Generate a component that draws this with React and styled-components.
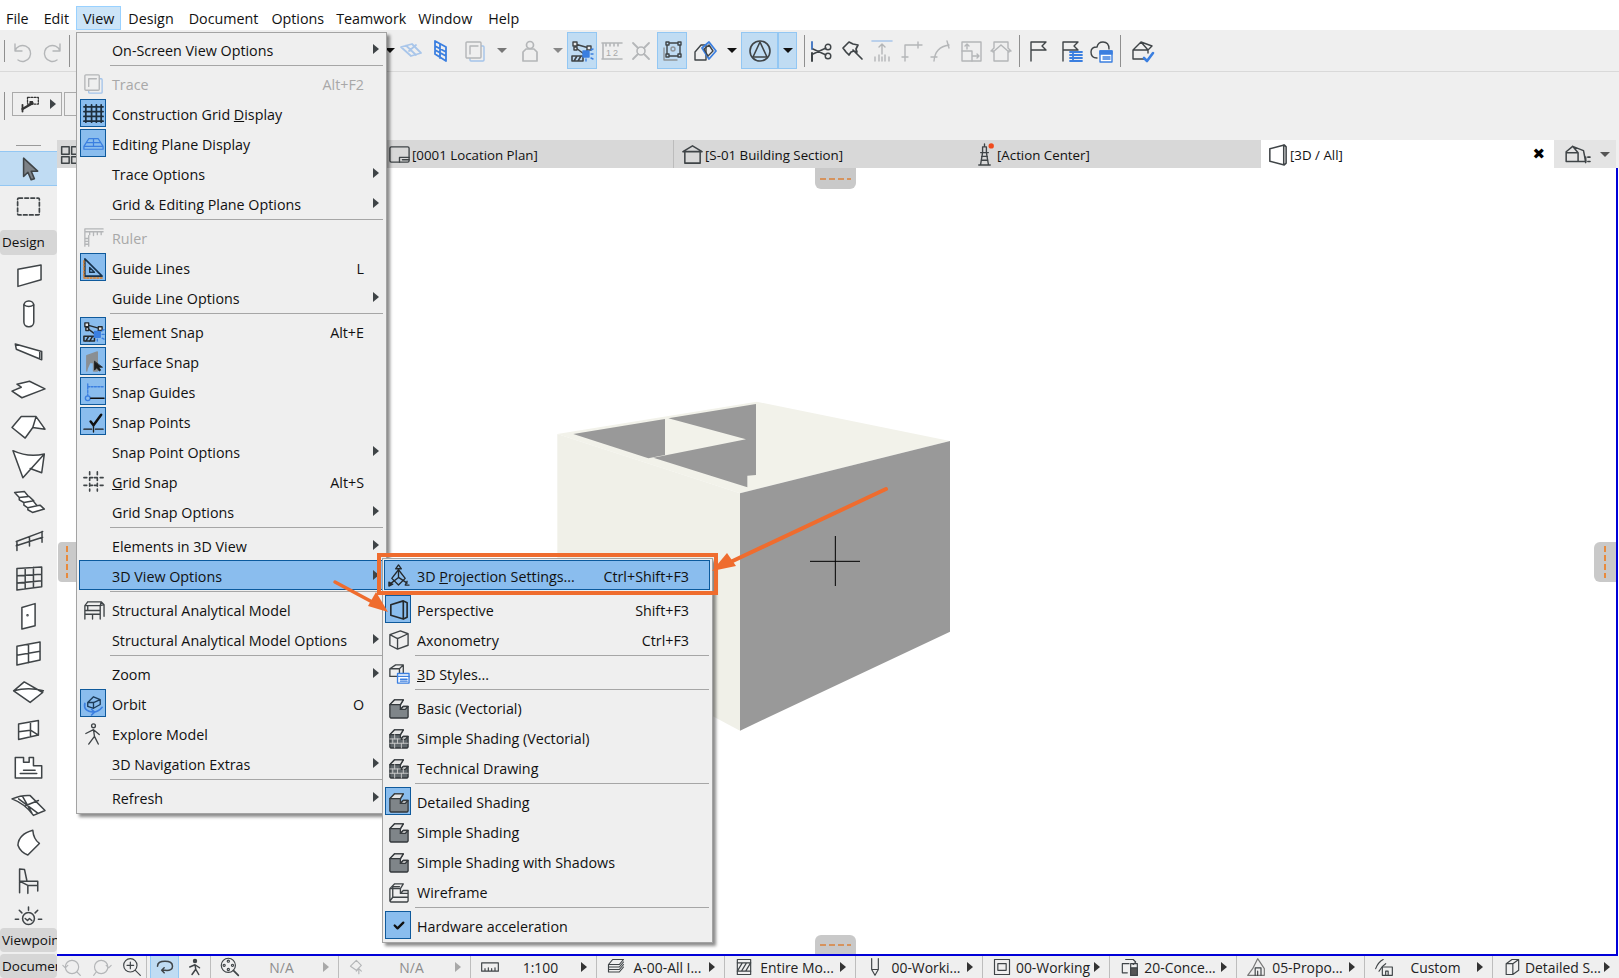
import React from "react";
import styled, { createGlobalStyle } from "styled-components";

const Global = createGlobalStyle`
  html, body { margin: 0; padding: 0; background: #fff; overflow: hidden; }
  * { box-sizing: border-box; }
  body { font-family: "Open Sans", "Noto Sans", sans-serif; color: #111; }
`;

const Svg = styled.svg`
  width: ${(p) => p.$s}px;
  height: ${(p) => p.$s}px;
  flex: none;
  fill: none;
  overflow: visible;
  stroke: ${(p) => p.$c};
  stroke-width: 1.4;
  stroke-linejoin: round;
  stroke-linecap: round;
`;
const SideSvg = styled.svg`
  width: 33px;
  height: 33px;
  flex: none;
  overflow: visible;
  fill: none;
  stroke: #3f4447;
  stroke-width: 4.6;
  stroke-linejoin: round;
  stroke-linecap: round;
`;

const GR = "#b4b6b8";
const BL = "#3b7fe0";
const cubeSolid = "M3 9l5-5h9l-3 5v5l3-3h5v11l-1 1H4l-1-1z";
const cubeTops = "M3 9l5-5h9l-3 5zM14 14l3-3h5l-3 3z";
const I = {
  undo: <path d="M4 5v7h7M4 12a8 8 0 1 1 3 9" />,
  redo: <path d="M20 5v7h-7M20 12a8 8 0 1 0-3 9" />,
  select: <path d="M7 2v17l4-4 3 7 3-1-3-7h6z" fill="#7d8287" stroke="#3f4447" />,
  marquee: <rect x="3" y="5" width="18" height="14" rx="1" strokeDasharray="3 2" />,
  pick: <><rect x="9" y="4" width="13" height="8" strokeDasharray="2.4 1.6" strokeWidth="1.5" /><path d="M3 18L15 11" strokeWidth="2.8" /><path d="M3 13v8" strokeWidth="2.2" /><rect x="12" y="9" width="3" height="3" fill="#333" /></>,
  grid: <path d="M4 3v18M10 3v18M15 3v18M20 3v18M2 5h20M2 10h20M2 15h20M2 20h20" stroke="#1e2f3e" strokeWidth="1.8" />,
  plane: <path d="M7 7h10l5 8H2zM12 7v8M4.5 11h15M2 15v3h20v-3" stroke={BL} strokeWidth="1.3" />,
  trace: <><rect x="7" y="7" width="14" height="15" rx="1" stroke="#a4c4ea" /><rect x="3" y="3" width="15" height="16" rx="1" stroke={GR} fill="#efefef" /><path d="M7 7h8M7 7v8" stroke={GR} /></>,
  ruler: <path d="M3 21V3h19M3 6h19M8 6v3M12 6v4M16 6v3M20 6v3M7 10v1M7 13H3M7 16H3M7 19H3M7 10v11" stroke={GR} />,
  triangle: <><path d="M3 3l18 18H3z" stroke="#16324c" strokeWidth="1.6" /><path d="M8 12l5 5H8z" stroke="#16324c" /><path d="M2 5v18h20" stroke="#e07a1a" strokeDasharray="2 1.5" /></>,
  esnap: <><path d="M5 5l14 4-5 6-8-6z" /><rect x="3" y="3" width="4" height="4" fill="#e8e8e8" /><rect x="17" y="7" width="4" height="4" fill="#e8e8e8" /><rect x="4" y="8" width="3" height="3" fill="#e8e8e8" /><path d="M2 17h11v5H2zM4 22l3-5M8 22l3-5" fill="none" strokeWidth="1.6" /><rect x="13" y="12" width="6" height="6" fill={BL} stroke={BL} /><path d="M21 11l2-1M21 15h2M21 19l2 1M16 20v2" stroke={BL} /></>,
  ssnap: <><path d="M5 22V6l11-4v20h-4v-9H9" fill="#8a8f93" stroke="#8a8f93" /><path d="M13 12v9l2.5-2.5L18 22l1.5-1-2-3h3.5z" fill="#1c1c1c" stroke="#1c1c1c" strokeWidth=".8" /></>,
  sguide: <><path d="M6 4v14" stroke={BL} strokeDasharray="2 1.5" /><path d="M6 7h17" stroke={BL} strokeDasharray="2 1.5" /><circle cx="6" cy="19" r="2.5" stroke={BL} /><path d="M9 19h14" stroke="#111" /></>,
  spoint: <><path d="M9 12l3 4 8-11" stroke="#111" strokeWidth="2.6" /><path d="M2 20h8M14 20h8M12 17v6" stroke="#1c1c1c" /></>,
  gsnap: <path d="M8 2v3M8 8v3M8 14v3M8 20v2M16 2v3M16 8v3M16 14v3M16 20v2M2 8h3M8 8h3M13 8h3M19 8h3M2 16h3M8 16h3M13 16h3M19 16h3" strokeWidth="1.7" />,
  struct: <path d="M6 4h14l3 3v12M3 8h16v14M3 8v14M6 4L3 8M20 4l-1 4M3 13h16M3 17h16M6 13V8M23 7l-4 1M11 17v5" />,
  orbit: <><path d="M6 11l6-6 7 3v5l-7 4-6-2zM12 11l7-3M12 11v6M12 11L6 11" stroke="#1d3c5a" /><path d="M3 12q-2 8 9 9 5 0 9-5M10 18l3 3-3 3" stroke={BL} strokeWidth="1.8" /></>,
  walk: <><circle cx="12" cy="4" r="2" /><path d="M4 12l8-4 6 5M12 8l1 7-6 8M13 15l4 8" /></>,
  proj: <><path d="M12 1l-3 4h6zM12 5v9M12 14l-9 7M12 14l9 6M2 23v-4l4 2zM23 22l-4 0 2-4" /><path d="M5 15l7-9 7 9-7 7z" /></>,
  persp: <path d="M4 7l13-4 4 2v15l-4 2L4 18zM17 3v19" strokeWidth="1.7" />,
  axon: <path d="M3 7l11-4 8 3v12l-11 4-8-4zM3 7l8 4 11-5M11 11v11" />,
  styles: <><path d="M3 7l6-4h8v12H3zM3 7h10l4-4M13 7v8" /><rect x="11" y="12" width="12" height="10" fill="#fff" stroke={BL} /><path d="M11 15h12M14 18h7M14 20h7" stroke={BL} /></>,
  basic: <><path d={cubeSolid} fill="#7f8589" stroke="#34393c" /><path d={cubeTops} fill="#e4e4e4" stroke="#34393c" /></>,
  brick: <><path d={cubeSolid} fill="#5f666a" stroke="#34393c" /><path d={cubeTops} fill="#e4e4e4" stroke="#34393c" /><path d="M3 13.5h11M3 18h19M8 9v4.5M11 13.5V18M6 13.5V18M8 18v5M17 14v4M15 18v5" stroke="#c8c8c8" strokeWidth="1" /></>,
  wire: <path d="M3 9l5-5h9l-3 5v5l3-3h5v11l-1 1H4l-1-1zM6 7h7M6 7v11h16M3 9h11v5h8M6 18l-3 4" />,
  check: <path d="M8 12l3 3 6-6" stroke="#111" strokeWidth="2.4" />,
  planeLt: <path d="M2 8l11-3 9 9-10 3zM7 6.5l10 9.5M10 12l7-6" stroke="#a9c6ea" strokeWidth="1.8" />,
  bluewall: <path d="M6 2l11 6v14L6 15zM6 7l11 6M6 11l11 6M11 5v14" stroke={BL} strokeWidth="1.8" />,
  stamp: <><circle cx="12" cy="6" r="3.5" stroke={GR} strokeWidth="1.7" /><path d="M8 10l-3 3v9h14v-9l-3-3z" stroke={GR} strokeWidth="1.7" /></>,
  ruler12: <><path d="M2 4h20M2 20h20M3 4v16M6 4v3M10 4v3M14 4v3M18 4v3" stroke={GR} strokeWidth="1.6" /><text x="6" y="17" fontSize="9" fill="#a8a8a8" stroke="none" fontFamily="Liberation Sans">1</text><text x="13" y="17" fontSize="9" fill="#a8a8a8" stroke="none" fontFamily="Liberation Sans">2</text></>,
  cross: <><path d="M4 4l5 5M20 4l-5 5M4 20l5-5M20 20l-5-5" stroke={GR} strokeWidth="1.8" /><circle cx="12" cy="12" r="4" stroke={GR} strokeWidth="1.6" /></>,
  nodes: <><path d="M4 9v12h13" stroke="#8f9498" /><rect x="7" y="4" width="13" height="13" /><rect x="6" y="3" width="3" height="3" fill="#c0dcf3" /><rect x="18" y="3" width="3" height="3" fill="#c0dcf3" /><rect x="18" y="15" width="3" height="3" fill="#c0dcf3" /><rect x="6" y="15" width="3" height="3" fill="#c0dcf3" /><circle cx="13" cy="10" r="2" stroke="#8f9498" /></>,
  diamond: <><path d="M2 13l6-7h5v15H2z" /><path d="M9 9l7-6 7 9-7 8z" stroke={BL} strokeWidth="1.8" /><path d="M11 10l5-4 4 6-5 5z" /></>,
  tri: <><circle cx="12" cy="12" r="10" strokeWidth="1.6" /><path d="M12 3L5 18h14z" strokeWidth="1.6" /></>,
  scissors: <><path d="M3 3v7" stroke="#4b7cc4" strokeWidth="2" /><path d="M3 14v8" strokeWidth="2" /><circle cx="19" cy="8" r="2.8" /><circle cx="19" cy="17" r="2.8" /><path d="M4 10l13 6M4 15l13-6" /></>,
  hammer: <path d="M3 9l6-6 4 2 5 1-2 4 1 3-3-1-3 1-2 3-3-3zM13 11l9 9" strokeWidth="1.7" />,
  extend: <><path d="M2 2h20" stroke="#a9c6ea" strokeWidth="1.6" /><path d="M12 15V5M9 8l3-3 3 3M5 22v-4M9 22v-6M12 22v-4M15 22v-6M19 22v-4" stroke={GR} /></>,
  corner: <path d="M6 22V6h17M3 18h6M19 3v6" stroke={GR} />,
  curve: <path d="M5 22Q6 8 20 6M2 18h6M18 2l2 7" stroke={GR} />,
  arrbox: <><rect x="3" y="3" width="19" height="19" stroke={GR} /><path d="M3 12h10v10M8 10V5M6 7l2-2 2 2M14 17h6M18 15l2 2-2 2" stroke={GR} /></>,
  home: <path d="M5 3h14v6l3 3-3 0v10H5V12H2l3-3zM12 6l-8 7M12 6l8 7" stroke={GR} />,
  flag: <path d="M5 22V3h15l-4 4 4 4H5" />,
  flagList: <><path d="M5 22V3h15l-4 4 4 4H5" /><path d="M12 13h12M12 16h12M12 19h12M12 22h12M15 13v9" stroke={BL} strokeWidth="1.8" /></>,
  cloud: <><path d="M8 19q-6 0-6-6 0-5 6-5 1-5 6-5 6 0 6 7" /><rect x="11" y="12" width="12" height="11" fill="#fff" stroke={BL} /><path d="M11 12h12v3H11z" fill={BL} stroke={BL} /><path d="M14 18h7M14 20h7" stroke={BL} /></>,
  houseCk: <><path d="M3 11l8-8 11 4 -4 4H3zM3 11v9h11M11 3l7 8v3" /><path d="M14 19l3 3 6-8" stroke={BL} strokeWidth="2.6" /></>,
  plan: <><rect x="2" y="4" width="20" height="16" rx="1.5" /><path d="M12 20v-5h10M15 17.5h7" /></>,
  section: <path d="M2 9l10-6 10 6H2zM4 9v12h16V9" strokeWidth="1.6" />,
  light: <><path d="M8 22l2-12h4l2 12M6 23h12M8 10h8M10 4h4v6h-4zM12 1v3M9 14h6M8.5 18h7" /><circle cx="19" cy="3" r="2.8" fill="#f04a1c" stroke="none" /></>,
  p3d: <path d="M4 6l15-4 2 2v17l-2 2L4 19zM18.5 2v21" strokeWidth="1.6" />,
  houseList: <><path d="M2 18V9l6-5 10 4 2 10zM8 4l5 6v8M2 10h11" /><path d="M20 14v5M22 14h2M22 18h2" strokeWidth="1.5" /></>,
  panels: <path d="M2 2h9v9H2zM2 14h9v8H2zM14 2h8v9h-8zM14 14h8v8h-8z" strokeWidth="1.8" />,
  zoomIn: <><circle cx="10" cy="10" r="8" /><path d="M16 16l6 6M6 10h8M10 6v8" /></>,
  undoMag: <><circle cx="12" cy="12" r="8" stroke="#b4b6b8" /><path d="M18 18l4 4M1 10l3 3 3-3" stroke="#b4b6b8" /></>,
  redoMag: <><circle cx="11" cy="12" r="8" stroke="#b4b6b8" /><path d="M5 18l-3 4M17 10l3 3 3-3" stroke="#b4b6b8" /></>,
  orbitS: <path d="M3 11q0-6 9-6 9 0 9 6t-9 5H8M11 13l-3 3 3 3" strokeWidth="1.8" />,
  walkS: <><circle cx="12" cy="4" r="2.2" fill="#3f4447" /><path d="M5 12l7-3 6 4M12 9l1 6-5 7M13 15l4 7" strokeWidth="2" /></>,
  zoomNav: <><circle cx="10" cy="10" r="8.5" /><circle cx="10" cy="5" r="1.3" /><circle cx="10" cy="15" r="1.3" /><circle cx="5" cy="10" r="1.3" /><circle cx="15" cy="10" r="1.3" /><path d="M16 16l6 6" strokeWidth="2" /></>,
  rot: <path d="M3 11l7-7 6 6-6 6zM13 20v-6M10 17l3-3 3 3" stroke={GR} />,
  scale: <path d="M2 7h20v10H2zM6 17v-3M10 17v-4M14 17v-3M18 17v-4" />,
  layers: <path d="M8 3h13l-5 6H3zM3 9v3h13l5-6M3 12v3h13l5-6M3 15v3h13l5-6" />,
  hatch: <><path d="M4 3h16v18H4z" /><path d="M4 7h16M4 17l6-10M9 17l6-10M14 17l6-10M4 17h16" /></>,
  pen: <path d="M8 2v13l4 7 4-7V2M8 15h8" />,
  frame: <><rect x="3" y="3" width="18" height="18" /><rect x="7" y="8" width="10" height="8" /></>,
  concept: <><path d="M4 8h8M4 8v11h6M14 8h8v14h-8z" /><path d="M8 3h9l3 3-3 3" /><path d="M14 13h8v9h-8z" fill="#555" /></>,
  prop: <><path d="M2 22l6-8 6-12 8 12v8H2z" stroke="#777" /><path d="M11 22V13h7v9M14 22v-5" /></>,
  cust: <><path d="M2 14Q5 6 11 3M6 17q3-6 8-9" /><rect x="10" y="12" width="12" height="10" /><path d="M14 22v-5h3v5" /></>,
  boxS: <path d="M5 8l7-5h8v13l-7 5H5zM5 8h8v13M13 8l7-5" />,
};

/* left palette tools, drawn on a 100-unit square */
const W = "#fff";
const sideTools = [
  <path key="wall" d="M18 31L88 18V63L18 83z" fill={W} />,
  <g key="col"><rect x="36" y="12" width="30" height="78" rx="14" fill={W} /><path d="M36 24q15 10 30 0" /></g>,
  <path key="beam" d="M10 27L90 50V75L13 43zM84 49V73" fill={W} />,
  <path key="slab" d="M53 25L100 48 30 75 0 55 28 43 15 34z" fill={W} />,
  <path key="roof" d="M28 17H73L100 55 63 50 40 82 0 50zM73 17L63 50" fill={W} />,
  <path key="shell" d="M3 8Q50 30 98 18L33 90zM98 18L90 75 55 62" fill={W} />,
  <path key="stair" d="M8 20L38 17 50 32 22 35zM22 35V42L36 50 66 45 52 32M36 50V58L48 66 76 60 64 45M48 66V72L62 80 98 70 85 58 75 60" fill={W} />,
  <path key="rail" d="M13 53L93 23M13 66L93 40M15 53V80M53 40V67M91 23V55" />,
  <path key="curtain" d="M15 20L90 15V75L15 85zM15 42L90 37M15 64L90 57M40 18V82M65 16V79" />,
  <g key="door"><path d="M30 23L70 11V78L30 88z" fill={W} /><circle cx="47" cy="46" r="1.5" /></g>,
  <path key="window" d="M15 28L85 15V70L15 85zM15 55L85 43M50 22V78" fill={W} />,
  <path key="morph" d="M37 21L93 53 55 83 5 48zM5 48Q50 35 95 48" fill={W} />,
  <path key="book" d="M20 33L80 23V67L20 80zM56 27V71M20 57L56 52 80 67" fill={W} />,
  <path key="zone" d="M10 20H35V34H52V20H65V45H90V82H10zM35 58H70M25 68H75" fill={W} />,
  <path key="mesh" d="M0 30Q30 18 55 20L100 65 65 80Q40 45 0 30zM32 22L60 72M42 50L80 35M20 30L78 73" fill={W} />,
  <path key="shell2" d="M63 13Q20 25 18 58 25 78 48 88L83 53Q65 40 63 13z" fill={W} />,
  <path key="chair" d="M23 87V15L38 17 45 50M23 52H78V82M23 52L48 65H78M48 65V89" />,
  <g key="lamp"><circle cx="50" cy="50" r="18" /><path d="M50 15v10M22 25l8 8M78 25l-8 8M10 52h10M80 52h10M40 50l7 6 6-6 7 6" /></g>,
];

const Glyph = ({ n, s = 24, c = "#3f4447" }) => (
  <Svg viewBox="0 0 24 24" $s={s} $c={c} aria-hidden="true">{I[n]}</Svg>
);

const App0 = styled.div`
  position: relative;
  width: 1619px;
  height: 978px;
  overflow: hidden;
  display: flex;
  flex-direction: column;
  background: #fff;
`;

/* menu bar */
const MenuBar = styled.div`
  height: 30px;
  flex: none;
  display: flex;
  align-items: flex-end;
  margin-left: -1px;
  background: #fff;
`;
const MenuTitle = styled.div`
  height: 24px;
  padding: 0 ${(p) => p.$pr}px 0 6px;
  font-size: 14.3px;
  line-height: 24px;
  white-space: nowrap;
  border: 1px solid ${(p) => (p.$open ? "#99d1ff" : "transparent")};
  background: ${(p) => (p.$open ? "#cce4f7" : "transparent")};
`;

/* top toolbar */
const TopBar = styled.div`
  height: 42px;
  flex: none;
  display: flex;
  align-items: center;
  padding-left: 4px;
  background: #efefef;
  border-bottom: 1px solid #d9d9d9;
`;
const VSep = styled.div`
  width: 1px;
  height: ${(p) => p.$h ?? 32}px;
  flex: none;
  background: #8f8f8f;
  margin-left: ${(p) => p.$ml ?? 0}px;
`;
const ToolBtn = styled.div`
  width: ${(p) => p.$w}px;
  height: 37px;
  flex: none;
  display: flex;
  align-items: center;
  justify-content: center;
  margin-left: ${(p) => p.$ml ?? 0}px;
  border: 1px solid ${(p) => (p.$on ? "#93c7f3" : "transparent")};
  background: ${(p) => (p.$on ? "#c0dcf3" : "transparent")};
`;
const Caret = styled.div`
  width: 0;
  height: 0;
  flex: none;
  border-left: 5px solid transparent;
  border-right: 5px solid transparent;
  border-top: 5px solid ${(p) => p.$c ?? "#111"};
`;
const BarGap = styled.div`
  width: ${(p) => p.$w}px;
  flex: none;
`;

/* info box row */
const InfoBar = styled.div`
  height: 68px;
  flex: none;
  display: flex;
  align-items: flex-start;
  padding: 20px 0 0 4px;
  background: #efefef;
`;
const InfoBtn = styled.div`
  width: ${(p) => p.$w}px;
  height: 24px;
  margin-left: ${(p) => p.$ml}px;
  flex: none;
  display: flex;
  align-items: center;
  justify-content: space-between;
  padding: 0 5px 0 7px;
  border: 1px solid #aaa;
`;
const RightArrow = styled.div`
  width: 0;
  height: 0;
  flex: none;
  border-top: 5px solid transparent;
  border-bottom: 5px solid transparent;
  border-left: 6px solid ${(p) => p.$c ?? "#3f4447"};
  margin: ${(p) => p.$m ?? "0"};
`;

/* main */
const Main = styled.div`
  flex: 1;
  min-height: 0;
  display: flex;
`;
const Sidebar = styled.div`
  width: 57px;
  flex: none;
  display: flex;
  flex-direction: column;
  background: #efefef;
`;
const SideTop = styled.div`
  height: 11px;
  flex: none;
  display: flex;
  align-items: center;
  justify-content: center;
`;
const SideLine = styled.div`
  width: 25px;
  height: 1px;
  background: #9a9a9a;
`;
const SelectRow = styled.div`
  height: 35px;
  flex: none;
  display: flex;
  align-items: center;
  justify-content: center;
  background: #c0dcf3;
  border-top: 1px solid #93c7f3;
  border-bottom: 1px solid #93c7f3;
`;
const MarqueeRow = styled.div`
  height: 40px;
  flex: none;
  display: flex;
  align-items: center;
  justify-content: center;
`;
const SideTab = styled.div`
  height: ${(p) => p.$h}px;
  flex: none;
  margin-top: ${(p) => p.$mt ?? 0}px;
  padding-left: 2px;
  overflow: hidden;
  white-space: nowrap;
  font-size: 13.5px;
  line-height: ${(p) => p.$h}px;
  background: #d6d6d6;
  border-radius: 4px;
`;
const ToolList = styled.div`
  flex: 1;
  min-height: 0;
  margin-top: 2px;
  overflow: hidden;
  display: flex;
  flex-direction: column;
`;
const SideTool = styled.div`
  height: 37.8px;
  flex: none;
  display: flex;
  align-items: center;
  justify-content: center;
`;

const Center = styled.div`
  flex: 1;
  min-width: 0;
  display: flex;
  flex-direction: column;
`;
const TabBar = styled.div`
  height: 28px;
  flex: none;
  display: flex;
  background: #efefef;
`;
const Tab = styled.div`
  width: ${(p) => p.$w}px;
  flex: none;
  display: flex;
  align-items: center;
  gap: 1px;
  padding-left: ${(p) => p.$pl}px;
  padding-top: 1px;
  background: ${(p) => p.$bg ?? "#d8d8d8"};
  border-right: ${(p) => (p.$div ? "1px solid #bcbcbc" : "0")};
  font-size: 13.3px;
  white-space: nowrap;
`;
const TabSpacer = styled.div`
  flex: none;
  width: ${(p) => p.$w}px;
`;
const CloseMark = styled.div`
  margin-left: auto;
  margin-right: 9px;
  font-size: 15px;
  font-weight: 700;
  line-height: 1;
  font-family: "DejaVu Sans", sans-serif;
  color: #000;
`;

const Canvas = styled.div`
  flex: 1;
  min-height: 0;
  position: relative;
  margin-right: 1px;
  background: #fff;
  border-right: 2px solid #0000d8;
  border-bottom: 2px solid #0000d8;
`;
const Cube = styled.svg`
  position: absolute;
  left: 483px;
  top: 212px;
  width: 440px;
  height: 360px;
`;
const Handle = styled.div`
  position: absolute;
  left: ${(p) => p.$left ?? "auto"};
  right: ${(p) => p.$right ?? "auto"};
  top: ${(p) => p.$top ?? "auto"};
  bottom: ${(p) => p.$bottom ?? "auto"};
  width: ${(p) => p.$w}px;
  height: ${(p) => p.$h}px;
  background: #c9c9c9;
  border-radius: ${(p) => p.$r};
  display: flex;
  align-items: center;
  justify-content: center;
`;
const DashH = styled.div`
  width: 31px;
  height: 2px;
  background: repeating-linear-gradient(90deg, #d6935d 0 6px, transparent 6px 9px);
`;
const DashV = styled.div`
  width: 2px;
  height: 32px;
  background: repeating-linear-gradient(180deg, #e88a3c 0 6px, transparent 6px 9px);
`;

/* status bar */
const StatusBar = styled.div`
  height: 22px;
  flex: none;
  display: flex;
  background: #efefef;
  font-size: 13.9px;
`;
const StatusBtn = styled.div`
  width: ${(p) => p.$w}px;
  flex: none;
  display: flex;
  align-items: center;
  justify-content: center;
  background: ${(p) => (p.$on ? "#c0dcf3" : "transparent")};
  border-left: 1px solid ${(p) => (p.$on ? "#93c7f3" : "transparent")};
  border-right: 1px solid ${(p) => (p.$on ? "#93c7f3" : "transparent")};
  margin-left: ${(p) => p.$ml ?? 0}px;
`;
const StatusSep = styled.div`
  width: 1px;
  flex: none;
  background: #bdbdbd;
`;
const StatusCell = styled.div`
  width: ${(p) => p.$w}px;
  flex: none;
  display: flex;
  align-items: center;
  padding: 0 9px 0 9px;
  border-left: 1px solid #bdbdbd;
`;
const StatusLabel = styled.div`
  flex: 1;
  min-width: 0;
  text-align: center;
  white-space: nowrap;
  color: ${(p) => (p.$dim ? "#8d8d8d" : "#222")};
`;

/* menus */
const Menu = styled.div`
  position: absolute;
  left: ${(p) => p.$x}px;
  top: ${(p) => p.$y}px;
  width: ${(p) => p.$w}px;
  padding: 1px 0 ${(p) => p.$pb}px;
  background: #efefef;
  border: 1px solid #a3a3a3;
  box-shadow: 3px 3px 3px rgba(0, 0, 0, 0.45);
  z-index: ${(p) => p.$z};
`;
const Row = styled.div`
  height: 30px;
  display: flex;
  align-items: center;
  margin: 0 ${(p) => p.$mr}px 0 ${(p) => p.$ml}px;
  border: 1px solid ${(p) => (p.$hi ? "#0b5a9e" : "transparent")};
  background: ${(p) => (p.$hi ? "#8abdee" : "transparent")};
  color: ${(p) => (p.$off ? "#a8a8a8" : "#111")};
  font-size: 14.3px;
  white-space: nowrap;
`;
const IconBox = styled.div`
  width: 26px;
  height: 28px;
  flex: none;
  display: flex;
  align-items: center;
  justify-content: center;
  border: 1px solid ${(p) => (p.$on ? "#0f5a9c" : "transparent")};
  background: ${(p) => (p.$on ? "#8abdee" : "transparent")};
`;
const Label = styled.div`
  flex: 1;
  margin-left: 6px;
  padding-top: 2px;
`;
const Short = styled.div`
  padding-top: 2px;
`;
const Slot = styled.div`
  width: ${(p) => p.$w}px;
  flex: none;
  display: flex;
  align-items: center;
`;
const MenuSep = styled.div`
  height: 4px;
  display: flex;
  align-items: center;
  margin: 0 ${(p) => p.$mr}px 0 ${(p) => p.$ml}px;
  &::after {
    content: "";
    flex: 1;
    height: 1px;
    margin-top: -1px;
    background: #a6a6a6;
  }
`;

/* annotations */
const OrangeBox = styled.div`
  position: absolute;
  left: 377px;
  top: 553px;
  width: 341px;
  height: 42px;
  border: 4px solid #ef6c2e;
  z-index: 5;
`;
const Overlay = styled.svg`
  position: absolute;
  left: 0;
  top: 0;
  width: 1619px;
  height: 978px;
  z-index: 6;
  pointer-events: none;
`;

const sep = "-";
const viewItems = [
  { l: "On-Screen View Options", a: 1 }, sep,
  { l: "Trace", s: "Alt+F2", off: 1, i: "trace" },
  { l: <>Construction Grid <u>D</u>isplay</>, i: "grid", on: 1 },
  { l: "Editing Plane Display", i: "plane", on: 1 },
  { l: "Trace Options", a: 1 },
  { l: "Grid & Editing Plane Options", a: 1 }, sep,
  { l: "Ruler", off: 1, i: "ruler" },
  { l: "Guide Lines", s: "L", i: "triangle", on: 1 },
  { l: "Guide Line Options", a: 1 }, sep,
  { l: <><u>E</u>lement Snap</>, s: "Alt+E", i: "esnap", on: 1 },
  { l: <><u>S</u>urface Snap</>, i: "ssnap", on: 1 },
  { l: "Snap Guides", i: "sguide", on: 1 },
  { l: "Snap Points", i: "spoint", on: 1 },
  { l: "Snap Point Options", a: 1 },
  { l: <><u>G</u>rid Snap</>, s: "Alt+S", i: "gsnap" },
  { l: "Grid Snap Options", a: 1 }, sep,
  { l: "Elements in 3D View", a: 1 },
  { l: "3D View Options", a: 1, hi: 1 }, sep,
  { l: "Structural Analytical Model", i: "struct" },
  { l: "Structural Analytical Model Options", a: 1 }, sep,
  { l: "Zoom", a: 1 },
  { l: "Orbit", s: "O", i: "orbit", on: 1 },
  { l: "Explore Model", i: "walk" },
  { l: "3D Navigation Extras", a: 1 }, sep,
  { l: "Refresh", a: 1 },
];
const subItems = [
  { l: <>3D <u>P</u>rojection Settings...</>, s: "Ctrl+Shift+F3", i: "proj", hi: 1 }, sep,
  { l: "Perspective", s: "Shift+F3", i: "persp", on: 1 },
  { l: "Axonometry", s: "Ctrl+F3", i: "axon" }, sep,
  { l: <><u>3</u>D Styles...</>, i: "styles" }, sep,
  { l: "Basic (Vectorial)", i: "basic" },
  { l: "Simple Shading (Vectorial)", i: "brick" },
  { l: "Technical Drawing", i: "brick" }, sep,
  { l: "Detailed Shading", i: "basic", on: 1 },
  { l: "Simple Shading", i: "basic" },
  { l: "Simple Shading with Shadows", i: "basic" },
  { l: "Wireframe", i: "wire" }, sep,
  { l: "Hardware acceleration", i: "check", on: 1 },
];

const MenuPanel = ({ items, x, y, w, pb, z, ml, mr, sl, sr, slot, arrowM }) => (
  <Menu $x={x} $y={y} $w={w} $pb={pb} $z={z}>
    {items.map((it, k) =>
      it === sep ? (
        <MenuSep key={k} $ml={sl} $mr={sr} />
      ) : (
        <Row key={k} $ml={ml} $mr={mr} $hi={it.hi} $off={it.off}>
          <IconBox $on={it.on}>{it.i && <Glyph n={it.i} s={23} c={it.on || it.hi ? "#25292c" : "#3f4447"} />}</IconBox>
          <Label>{it.l}</Label>
          {it.s && <Short>{it.s}</Short>}
          <Slot $w={slot}>{it.a && <RightArrow $m={arrowM} />}</Slot>
        </Row>
      )
    )}
  </Menu>
);

const titles = [["File", 7], ["Edit", 6], ["View", 6], ["Design", 7], ["Document", 5], ["Options", 4], ["Teamwork", 4], ["Window", 8], ["Help", 6]];
const cells = [
  { w: 128, i: "zoomNav", t: "N/A", dim: 1 },
  { w: 132, i: "rot", t: "N/A", dim: 1 },
  { w: 126, i: "scale", t: "1:100" },
  { w: 128, i: "layers", t: "A-00-All I..." },
  { w: 131, i: "hatch", t: "Entire Mo..." },
  { w: 127, i: "pen", t: "00-Worki..." },
  { w: 127, i: "frame", t: "00-Working" },
  { w: 127, i: "concept", t: "20-Conce..." },
  { w: 128, i: "prop", t: "05-Propo..." },
  { w: 128, i: "cust", t: "Custom" },
  { w: 127, i: "boxS", t: "Detailed S..." },
];

export default function App() {
  return (
    <App0>
      <Global />
      <MenuBar>
        {titles.map(([t, pr]) => (
          <MenuTitle key={t} $open={t === "View"} $pr={pr}>{t}</MenuTitle>
        ))}
      </MenuBar>

      <TopBar>
        <VSep $h={22} />
        <ToolBtn $w={30} $ml={3}><Glyph n="undo" c={GR} /></ToolBtn>
        <ToolBtn $w={28}><Glyph n="redo" c={GR} /></ToolBtn>
        <VSep $ml={3} />
        <BarGap $w={313} />
        <ToolBtn $w={13}><Caret /></ToolBtn>
        <ToolBtn $w={30}><Glyph n="planeLt" /></ToolBtn>
        <ToolBtn $w={30}><Glyph n="bluewall" /></ToolBtn>
        <ToolBtn $w={38}><Glyph n="trace" /></ToolBtn>
        <ToolBtn $w={16}><Caret $c="#777" /></ToolBtn>
        <ToolBtn $w={40}><Glyph n="stamp" /></ToolBtn>
        <ToolBtn $w={15}><Caret $c="#888" /></ToolBtn>
        <ToolBtn $w={30} $ml={2} $on><Glyph n="esnap" /></ToolBtn>
        <ToolBtn $w={29}><Glyph n="ruler12" /></ToolBtn>
        <ToolBtn $w={30}><Glyph n="cross" /></ToolBtn>
        <ToolBtn $w={30} $ml={1} $on><Glyph n="nodes" /></ToolBtn>
        <ToolBtn $w={36}><Glyph n="diamond" /></ToolBtn>
        <ToolBtn $w={18}><Caret /></ToolBtn>
        <ToolBtn $w={37} $on><Glyph n="tri" /></ToolBtn>
        <ToolBtn $w={19} $on><Caret /></ToolBtn>
        <VSep $ml={7} />
        <ToolBtn $w={32}><Glyph n="scissors" /></ToolBtn>
        <ToolBtn $w={30}><Glyph n="hammer" /></ToolBtn>
        <ToolBtn $w={29}><Glyph n="extend" /></ToolBtn>
        <ToolBtn $w={30}><Glyph n="corner" /></ToolBtn>
        <ToolBtn $w={30}><Glyph n="curve" /></ToolBtn>
        <ToolBtn $w={30}><Glyph n="arrbox" /></ToolBtn>
        <ToolBtn $w={30}><Glyph n="home" /></ToolBtn>
        <VSep $ml={3} />
        <ToolBtn $w={35}><Glyph n="flag" /></ToolBtn>
        <ToolBtn $w={30}><Glyph n="flagList" /></ToolBtn>
        <ToolBtn $w={31}><Glyph n="cloud" /></ToolBtn>
        <VSep $ml={4} />
        <ToolBtn $w={36} $ml={3}><Glyph n="houseCk" /></ToolBtn>
      </TopBar>

      <InfoBar>
        <VSep $h={28} />
        <InfoBtn $w={50} $ml={7}><Glyph n="pick" s={20} c="#333" /><RightArrow /></InfoBtn>
        <InfoBtn $w={30} $ml={2} />
      </InfoBar>

      <Main>
        <Sidebar>
          <SideTop><SideLine /></SideTop>
          <SelectRow><Glyph n="select" s={26} /></SelectRow>
          <MarqueeRow><Glyph n="marquee" s={29} /></MarqueeRow>
          <SideTab $h={25} $mt={4}>Design</SideTab>
          <ToolList>
            {sideTools.map((t) => (
              <SideTool key={t.key}><SideSvg viewBox="0 0 100 100" aria-hidden="true">{t}</SideSvg></SideTool>
            ))}
          </ToolList>
          <SideTab $h={24}>Viewpoints</SideTab>
          <SideTab $h={24} $mt={2}>Document</SideTab>
        </Sidebar>

        <Center>
          <TabBar>
            <Tab $w={617} $pl={3} $div>
              <Glyph n="panels" s={20} />
              <TabSpacer $w={306} />
              <Glyph n="plan" s={23} />
              [0001 Location Plan]
            </Tab>
            <Tab $w={287} $pl={7}><Glyph n="section" s={23} />[S-01 Building Section]</Tab>
            <Tab $w={300} $pl={12}><Glyph n="light" s={23} />[Action Center]</Tab>
            <Tab $w={293} $pl={5} $bg="#fff"><Glyph n="p3d" s={23} />[3D / All]<CloseMark>✖</CloseMark></Tab>
            <Tab $w={62} $pl={10} $bg="#e4e4e4"><Glyph n="houseList" s={26} /><TabSpacer $w={8} /><Caret $c="#555" /></Tab>
          </TabBar>
          <Canvas>
            <Cube viewBox="0 0 1320 1080">
              <polygon points="52,162 650,65 1230,183 600,340" fill="#f2f2ea" />
              <polygon points="52,162 600,340 600,1052 52,760" fill="#f0f0e8" />
              <polygon points="600,340 1230,183 1230,755 600,1052" fill="#999999" />
              <polygon points="100,162 375,117 375,225 325,235" fill="#999999" />
              <polygon points="385,115 648,72 648,285 622,287 622,322 340,233 618,178" fill="#999999" />
              <path d="M810 544H960M886 468V618" stroke="#000" strokeWidth="3" />
            </Cube>
            <Handle $left="758px" $top="0" $w={41} $h={21} $r="0 0 6px 6px"><DashH /></Handle>
            <Handle $left="758px" $bottom="0" $w={41} $h={19} $r="6px 6px 0 0"><DashH /></Handle>
            <Handle $left="1px" $top="374px" $w={18} $h={40} $r="4px 0 0 4px"><DashV /></Handle>
            <Handle $right="0" $top="374px" $w={22} $h={40} $r="6px 0 0 6px"><DashV /></Handle>
          </Canvas>
          <StatusBar>
            <StatusBtn $w={30}><Glyph n="undoMag" s={20} /></StatusBtn>
            <StatusBtn $w={30}><Glyph n="redoMag" s={20} /></StatusBtn>
            <StatusBtn $w={29}><Glyph n="zoomIn" s={20} /></StatusBtn>
            <StatusSep />
            <StatusBtn $w={29} $ml={3} $on><Glyph n="orbitS" s={20} /></StatusBtn>
            <StatusBtn $w={31}><Glyph n="walkS" s={18} /></StatusBtn>
            {cells.map((c) => (
              <StatusCell key={c.t + c.i} $w={c.w}>
                <Glyph n={c.i} s={20} />
                <StatusLabel $dim={c.dim}>{c.t}</StatusLabel>
                <RightArrow $c={c.dim ? "#a8a8a8" : "#333"} />
              </StatusCell>
            ))}
          </StatusBar>
        </Center>
      </Main>

      <MenuPanel items={viewItems} x={76} y={32} w={311} pb={1} z={3} ml={2} mr={3} sl={33} sr={3} slot={18} arrowM="0 0 0 9px" />
      <MenuPanel items={subItems} x={382} y={558} w={331} pb={2} z={4} ml={1} mr={2} sl={32} sr={3} slot={20} arrowM="0" />
      <OrangeBox />
      <Overlay viewBox="0 0 1619 978">
        <path d="M886 489L722 566" stroke="#ef6c2e" strokeWidth="4" strokeLinecap="round" />
        <polygon points="712,571 727,553 736,566" fill="#ef6c2e" />
        <path d="M335 582L376 604" stroke="#ef6c2e" strokeWidth="3.5" strokeLinecap="round" />
        <polygon points="388,612 368,606 376,592" fill="#ef6c2e" />
      </Overlay>
    </App0>
  );
}
